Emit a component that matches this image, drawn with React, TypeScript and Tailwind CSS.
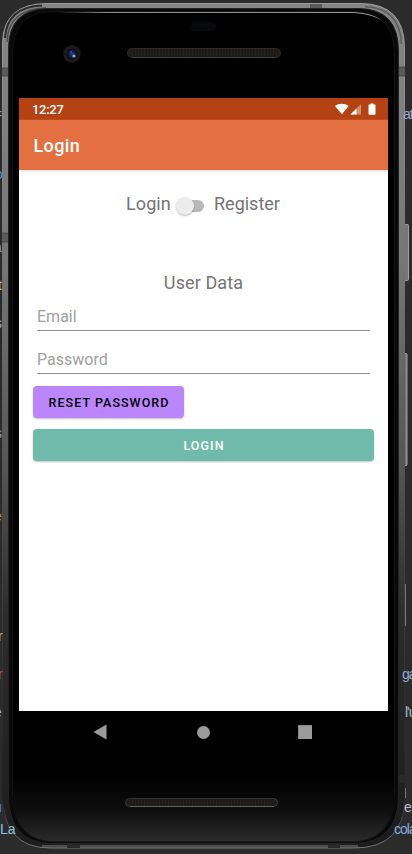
import React, { useState } from "react";

type Fragment = { text: string; className: string };

const fragments: Fragment[] = [
  { text: "at", className: "left-[403px] top-[106px] text-[#9ba9c4] tracking-[-1px]" },
  { text: "ga", className: "left-[402px] top-[666px] text-[#98a9d0] tracking-[-1px]" },
  { text: "l'u", className: "left-[405px] top-[704px] text-[#aab7ce] tracking-[-1px]" },
  { text: "e", className: "left-[404px] top-[799px] text-[#b8c0cc]" },
  { text: "cola", className: "left-[394px] top-[821px] text-[#8aa7dc] tracking-[-1px]" },
  { text: "=", className: "left-[-6px] top-[106px] text-[#8c9bb8]" },
  { text: "o", className: "left-[-5px] top-[166px] text-[#4f8fdc]" },
  { text: "a", className: "left-[-6px] top-[239px] text-[#8c9bc4]" },
  { text: "t", className: "left-[-2px] top-[277px] text-[#c0b7a0]" },
  { text: "s", className: "left-[-5px] top-[315px] text-[#93abd0]" },
  { text: "s", className: "left-[-5px] top-[425px] text-[#8c9bc4]" },
  { text: "e", className: "left-[-6px] top-[508px] text-[#c78b4a]" },
  { text: "r", className: "left-[-2px] top-[628px] text-[#c0a989]" },
  { text: "r", className: "left-[-2px] top-[666px] text-[#b8503f]" },
  { text: "e", className: "left-[-6px] top-[704px] text-[#9badc8]" },
  { text: "u", className: "left-[-6px] top-[799px] text-[#5588dc]" },
  { text: "La", className: "left-0 top-[821px] text-[#8fc0e0]" },
];

function Device() {
  return (
    <svg className="absolute left-0 top-0" width="412" height="854" viewBox="0 0 412 854" aria-hidden="true">
      <defs>
        <linearGradient id="metal" x1="0" y1="0" x2="0" y2="1">
          <stop offset="0" stopColor="#858585" />
          <stop offset=".3" stopColor="#777" />
          <stop offset=".55" stopColor="#555" />
          <stop offset=".72" stopColor="#2d2d2d" />
          <stop offset="1" stopColor="#1c1c1c" />
        </linearGradient>
        <linearGradient id="edge" x1="0" y1="0" x2="0" y2="1">
          <stop offset="0" stopColor="#9a9a9a" />
          <stop offset=".35" stopColor="#6f6f6f" />
          <stop offset=".7" stopColor="#3d3d3d" />
          <stop offset=".94" stopColor="#202020" />
          <stop offset="1" stopColor="#777" />
        </linearGradient>
        <linearGradient id="chin" x1="0" y1="0" x2="0" y2="1">
          <stop offset="0" stopColor="#000" />
          <stop offset=".55" stopColor="#0f0f0f" />
          <stop offset="1" stopColor="#2b2b2b" />
        </linearGradient>
        <linearGradient id="shine" x1="0" y1="0" x2="1" y2="0">
          <stop offset="0" stopColor="#838b89" stopOpacity="0" />
          <stop offset=".15" stopColor="#838b89" />
          <stop offset="1" stopColor="#969d9b" />
        </linearGradient>
        <radialGradient id="lens">
          <stop offset="0" stopColor="#263a88" />
          <stop offset=".6" stopColor="#121a40" />
          <stop offset="1" stopColor="#08090c" />
        </radialGradient>
        <pattern id="mesh" width="3" height="12" patternUnits="userSpaceOnUse">
          <rect width="3" height="12" fill="#1b1a17" />
          <rect width="1" height="12" fill="#25221e" />
        </pattern>
      </defs>
      <g fill="#777" stroke="#a0a0a0">
        <rect x="404.5" y="224.5" width="4" height="56" rx="1" />
        <rect x="404" y="353.5" width="3" height="112" rx="1" />
      </g>
      <path d="M405.5 584v42M405.5 788v10" stroke="#777" />
      <path d="M46 3.5H361Q404.5 4 404.5 48V798Q404.5 848 354 848H50Q2.5 848 2.5 794V42Q4 4 46 3.5Z" fill="url(#metal)" stroke="url(#edge)" />
      <path d="M5 38Q7 7 42 5.500" fill="none" stroke="#2c2c2c" strokeWidth="2" />
      <path d="M7 42Q8 9 46 8" fill="none" stroke="#4e4e4e" strokeWidth="1.500" />
      <path d="M365 6.500Q400 8 401.500 44" fill="none" stroke="#5b5b5b" strokeWidth="1.500" />
      <path d="M48 8.500H359Q398.500 9 398.500 51V796Q398.500 843.500 353 843.500H52Q8.500 843.500 8.500 795V48Q9 9 48 8.500Z" fill="#090909" stroke="#242424" />
      <path d="M50 11.500H356Q394.500 14 394.500 54V793Q394.500 842 350 842H56Q12.500 842 12.500 793V54Q12.500 14 50 11.500Z" fill="#000" stroke="#141414" />
      <path d="M13 775H394V793Q394 841.500 350 841.500H56Q13 841.500 13 793Z" fill="url(#chin)" />
      <path d="M56 12H354Q373 13 383 21Q373 14.500 354 13H56Z" fill="url(#shine)" />
      <path d="M42 847H358" stroke="#777" />
      <path d="M42 845.500H358" stroke="#525252" />
      <g fill="#5a5a5a">
        <rect x="2" y="68" width="6" height="8" />
        <rect x="2" y="233" width="6" height="9" />
        <rect x="399" y="67" width="6" height="9" />
        <rect x="310" y="4" width="12" height="4" />
      </g>
      <path d="M2 68h6M2 76h6M2 233h6M2 242h6M399 67h6M399 76h6" stroke="#3c3c3c" strokeWidth=".7" />
      <g fill="#292929">
        <rect x="399" y="775" width="6" height="8" />
        <rect x="67" y="844" width="13" height="4" />
        <rect x="328" y="844" width="12" height="4" />
      </g>
      <rect x="190" y="22" width="26" height="9" rx="4.500" fill="#07090d" />
      <circle cx="72" cy="54" r="8.700" fill="#1c1b1b" />
      <circle cx="72" cy="54" r="5.500" fill="url(#lens)" />
      <circle cx="74" cy="56" r="1.600" fill="#8fa4ef" />
      <circle cx="71" cy="52" r="1" fill="#3d4ea0" />
      <rect x="127.500" y="48.500" width="153" height="9" rx="4.500" fill="url(#mesh)" stroke="#2c2926" />
      <path d="M132 57.500H276" stroke="#45423e" />
      <rect x="125.500" y="798.500" width="152" height="8" rx="4" fill="url(#mesh)" stroke="#373733" />
      <path d="M130 806.500H274" stroke="#62625c" />
    </svg>
  );
}

function StatusBar() {
  return (
    <header className="flex h-[22px] items-center justify-between border-b border-[#c14c1c] bg-[#b44213] pl-[13px] pr-[11px] text-white">
      <span className="pt-0.5 text-[13px] font-medium leading-5 tracking-[-0.3px]">12:27</span>
      <svg width="42" height="14" viewBox="0 0 42 14" fill="#fff">
        <path d="M0 4C3.700.9 9.700.9 13.700 4L6.900 12.200Z" />
        <path d="M26 2V12.500H15.500Z" opacity=".4" />
        <path d="M21.500 6.500V12.500H15.500Z" />
        <path d="M35.500 1.500h3v1h1.300q.7 0 .7.700v8.800q0 .7-.7.700h-5.600q-.7 0-.7-.7V3.200q0-.7.7-.7h1.300Z" />
      </svg>
    </header>
  );
}

function NavBar() {
  return (
    <nav className="flex h-[43px] items-center justify-between pl-[74px] pr-[76px] text-[#9b9b9b]">
      <svg width="14" height="16" viewBox="0 0 14 16" fill="currentColor" className="-mt-px"><path d="M.500 8 13.500 .500V15.500Z" /></svg>
      <span className="ml-px size-[13px] rounded-full bg-current" />
      <span className="-mt-px size-[14px] border-l border-t border-[#858585] bg-current" />
    </nav>
  );
}

export default function App() {
  const [register, setRegister] = useState(false);
  return (
    <div className="relative h-[854px] w-[412px] overflow-hidden bg-[#2b2b2b] font-[Roboto,sans-serif]">
      <Device />
      {fragments.map((f, i) => (
        <span key={i} className={`absolute whitespace-nowrap font-['Liberation_Sans',sans-serif] text-[14px] leading-4 ${f.className}`}>{f.text}</span>
      ))}
      <div className="relative ml-[19px] w-[369px] pt-[98px]">
        <div className="flex h-[613px] flex-col bg-white">
          <StatusBar />
          <div className="flex h-[50px] items-center bg-[#e47041] pl-[14.5px] text-[18px] font-medium tracking-[0.4px] text-white shadow-[0_1px_2px_#00000025]">
            <h1>Login</h1>
          </div>
          <main className="flex flex-col px-[14px] pt-[22px] text-[#757575]">
            <div className="flex h-6 items-center pl-[93px] text-[18px] leading-6">
              <span className="w-[50px] tracking-[0.1px]">Login</span>
              <button onClick={() => setRegister(!register)} aria-label="Register" role="switch" aria-checked={register} className="mt-1 flex h-5 w-[29px] items-center">
                <span className={`flex h-[13px] w-[29px] items-center rounded-full ${register ? "justify-end" : "justify-start"}`}>
                  <span className="z-10 size-[18px] shrink-0 rounded-full bg-[#ececec] shadow-[0_1px_2px_#00000045]" />
                  <span className="-ml-[9px] h-3 w-[19px] shrink-0 rounded-r-full bg-[#b9b9b9]" />
                </span>
              </button>
              <span className="ml-[9px]">Register</span>
            </div>
            <h2 className="mt-[55px] text-center text-[18px] leading-6 tracking-[0.1px]">User Data</h2>
            <input aria-label="Email" placeholder="Email" className="mx-1 mt-[9px] h-[27px] border-b border-[#949494] pb-px text-[16px] outline-none placeholder:text-[#a0a0a0]" />
            <input aria-label="Password" type="password" placeholder="Password" className="mx-1 mt-4 h-[27px] border-b border-[#949494] pb-px text-[16px] outline-none placeholder:text-[#a0a0a0]" />
            <button className="mt-3 h-8 w-[151px] whitespace-nowrap rounded bg-[#bb86fc] pl-px pt-0.5 text-[12.5px] font-medium tracking-[1.05px] text-black shadow-[0_1px_2px_#00000040]">RESET PASSWORD</button>
            <button className="mt-[11px] h-8 rounded bg-[#6fbaaa] pl-px pt-0.5 text-[12.5px] font-medium tracking-[1.05px] text-white shadow-[0_1px_2px_#00000040]">LOGIN</button>
          </main>
        </div>
        <NavBar />
      </div>
    </div>
  );
}
